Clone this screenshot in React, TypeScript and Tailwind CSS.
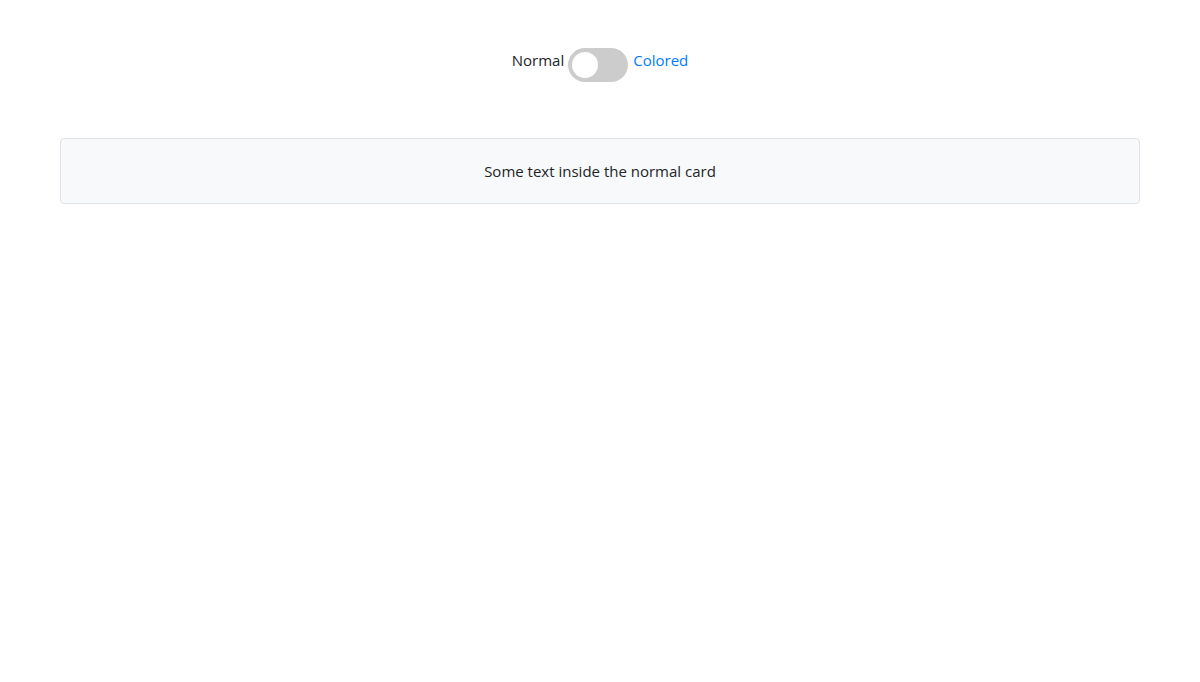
import { useState } from 'react'

export default function App() {
  const [colored, setColored] = useState(false)

  return (
    <div className="min-h-screen bg-white px-[60px] pt-[48px] text-[15px] text-[#212529]" style={{ fontFamily: '"Open Sans", "Noto Sans", sans-serif' }}>
      {/* Toggle */}
      <div className="flex items-start justify-center gap-[4px]">
        <span className="leading-6">Normal</span>
        <button
          onClick={() => setColored(!colored)}
          className={`relative h-[34px] w-[60px] rounded-full transition-colors ${colored ? 'bg-[#2196f3]' : 'bg-[#cccccc]'}`}
          aria-label="Toggle card style"
        >
          <span
            className={`absolute left-[4px] top-[4px] h-[26px] w-[26px] rounded-full bg-white transition-transform ${colored ? 'translate-x-[26px]' : ''}`}
          />
        </button>
        <span className="ml-[1px] leading-6 text-[#007bff]">Colored</span>
      </div>

      {/* Card */}
      <div
        className={`mt-[56px] rounded-[4px] border p-5 text-center leading-6 ${colored ? 'border-[#007bff] bg-[#007bff] text-white' : 'border-[#dee2e6] bg-[#f8f9fa]'}`}
      >
        Some text inside the {colored ? 'colored' : 'normal'} card
      </div>
    </div>
  )
}
